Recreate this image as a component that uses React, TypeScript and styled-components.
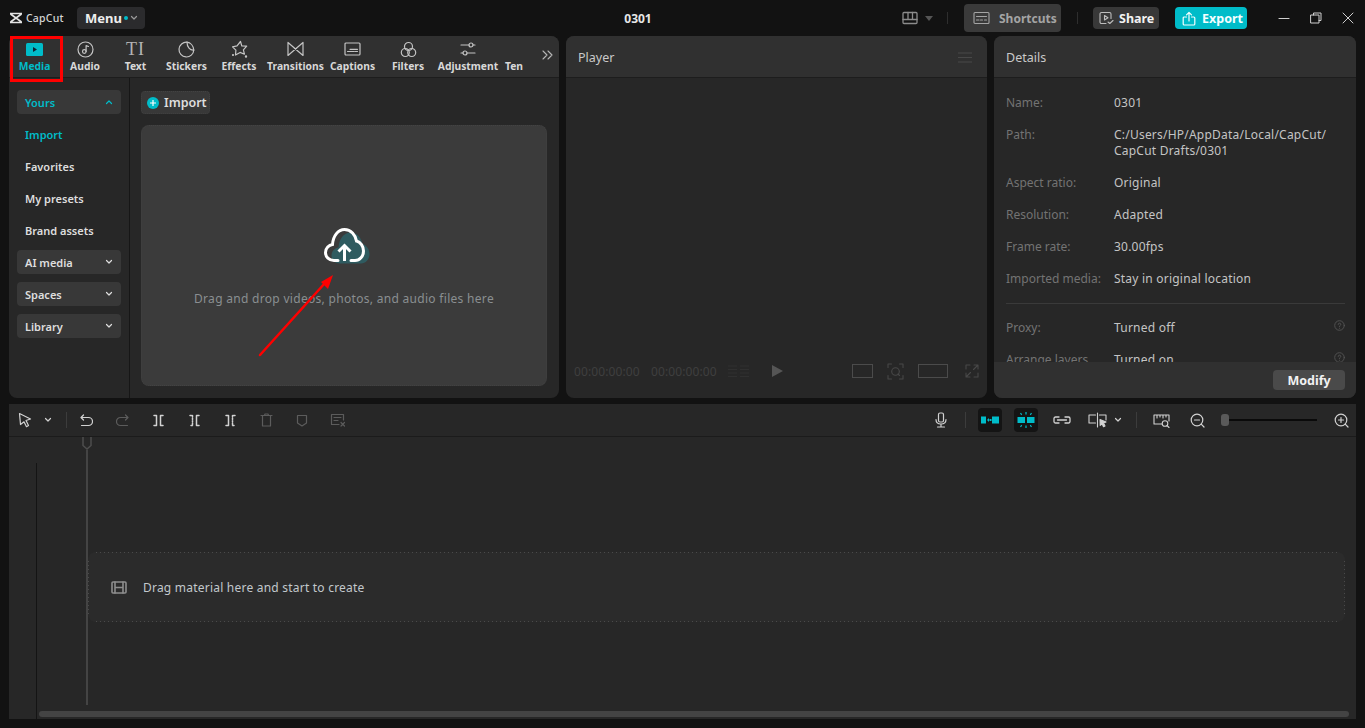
import React from 'react';
import styled, { createGlobalStyle } from 'styled-components';

const GlobalStyle = createGlobalStyle`
  html, body {
    margin: 0;
    padding: 0;
    background: #121212;
  }
  * {
    box-sizing: border-box;
  }
`;

const teal = '#00bcc9';
const uiFont = `"Noto Sans", "Open Sans", "Liberation Sans", sans-serif`;

const Page = styled.div`
  position: relative;
  width: 100%;
  height: 100vh;
  min-height: 728px;
  display: flex;
  flex-direction: column;
  overflow: hidden;
  background: #121212;
  color: #dcdcdc;
  font-family: ${uiFont};
`;

/* top bar */
const TopBar = styled.header`
  height: 36px;
  flex: none;
  display: grid;
  grid-template-columns: 615px 46px 1fr;
  align-items: center;
`;

const TopLeft = styled.div`
  display: flex;
  align-items: center;
  padding-left: 9px;
`;

const Logo = styled.div`
  display: flex;
  align-items: center;
  gap: 3px;
  width: 68px;
  font-size: 10.5px;
  font-weight: 500;
  letter-spacing: 0.2px;
  color: #d6d6d6;
`;

const MenuButton = styled.div`
  width: 68px;
  height: 22px;
  display: flex;
  align-items: center;
  padding-left: 8px;
  border-radius: 4px;
  background: #2b2b2d;
  font-size: 13px;
  font-weight: 700;
  color: #eee;
`;

const MenuCaret = styled.span`
  display: flex;
  color: #9a9a9a;
`;

const TealDot = styled.span`
  width: 4px;
  height: 4px;
  margin: 0 2px;
  border-radius: 50%;
  background: ${teal};
`;

const Title = styled.div`
  text-align: center;
  font-size: 12px;
  font-weight: 700;
  color: #e6e6e6;
`;

const TopRight = styled.div`
  display: flex;
  align-items: center;
  justify-content: flex-end;
`;

const LayoutPicker = styled.span`
  display: flex;
  align-items: center;
  gap: 7px;
  color: #8c8c8c;
`;

const TopDivider = styled.span<{ $left: number; $right: number }>`
  width: 1px;
  height: 12px;
  background: #2e2e2e;
  margin: 0 ${({ $right }) => $right}px 0 ${({ $left }) => $left}px;
`;

const ShortcutsButton = styled.div`
  width: 97px;
  height: 28px;
  display: flex;
  align-items: center;
  gap: 9px;
  padding-left: 9px;
  border-radius: 4px;
  background: #3a3a3a;
  font-size: 12px;
  font-weight: 700;
  color: #a4a4a4;
`;

const ShareButton = styled.div`
  width: 66px;
  height: 22px;
  display: flex;
  align-items: center;
  gap: 5px;
  padding-left: 6px;
  border-radius: 4px;
  background: #383838;
  font-size: 12.5px;
  font-weight: 700;
  color: #f2f2f2;
`;

const ShareIcon = styled.span`
  display: flex;
  color: #bdbdbd;
`;

const ExportButton = styled.div`
  width: 72px;
  height: 22px;
  margin-left: 16px;
  display: flex;
  align-items: center;
  gap: 6px;
  padding-left: 7px;
  border-radius: 4px;
  background: ${teal};
  font-size: 12.5px;
  font-weight: 700;
  color: #f4ffff;
`;

const WindowButtons = styled.div`
  display: flex;
  align-items: center;
  margin-left: 21px;
  padding-right: 1px;
`;

const WindowButton = styled.div`
  width: 32px;
  display: flex;
  justify-content: center;
  color: #cfcfcf;
`;

/* panels */
const PanelRow = styled.main`
  height: 362px;
  flex: none;
  display: flex;
  gap: 7px;
  padding: 0 9px;
`;

const Panel = styled.section<{ $width: number }>`
  width: ${({ $width }) => $width}px;
  flex: none;
  display: flex;
  flex-direction: column;
  border-radius: 8px;
  overflow: hidden;
  background: #272727;
`;

const PanelHeader = styled.div`
  height: 42px;
  flex: none;
  display: flex;
  align-items: center;
  justify-content: space-between;
  padding: 1px 15px 0 12px;
  background: #303030;
  border-bottom: 1px solid #1d1d1d;
  font-size: 12.5px;
  color: #c9c9c9;
`;

const TabBar = styled.nav`
  height: 42px;
  flex: none;
  display: flex;
  background: #303030;
  border-bottom: 1px solid #1d1d1d;
`;

const Tab = styled.div<{ $width: number; $active?: boolean }>`
  width: ${({ $width }) => $width}px;
  flex: none;
  display: flex;
  flex-direction: column;
  align-items: center;
  justify-content: flex-start;
  padding-top: 3px;
  font-size: 10.3px;
  font-weight: 700;
  white-space: nowrap;
  color: ${({ $active }) => ($active ? teal : '#d8d8d8')};
`;

const TabIcon = styled.div`
  height: 20px;
  display: flex;
  align-items: center;
  justify-content: center;
  color: #c4c4c4;
`;

const TabLabel = styled.span`
  line-height: 14px;
`;

const SerifIcon = styled.span`
  font-family: "Liberation Serif", serif;
  font-size: 18px;
  font-weight: 400;
  line-height: 20px;
  letter-spacing: 1px;
  color: #b4b4b4;
`;

const MoreTabs = styled.div`
  margin-left: 14px;
  height: 38px;
  display: flex;
  align-items: center;
  color: #b5b5b5;
`;

const MediaBody = styled.div`
  flex: 1;
  display: flex;
  min-height: 0;
`;

const Sidebar = styled.aside`
  width: 121px;
  flex: none;
  padding: 12px 8px 0;
  border-right: 1px solid #161616;
  display: flex;
  flex-direction: column;
  gap: 8px;
`;

const GroupHeader = styled.div<{ $active?: boolean }>`
  height: 24px;
  flex: none;
  display: flex;
  align-items: center;
  justify-content: space-between;
  padding: 0 8px;
  border-radius: 4px;
  background: #383838;
  font-size: 11px;
  font-weight: 600;
  color: ${({ $active }) => ($active ? teal : '#dedede')};
`;

const SideItem = styled.div<{ $active?: boolean }>`
  height: 24px;
  flex: none;
  display: flex;
  align-items: center;
  padding-left: 8px;
  font-size: 11px;
  font-weight: 600;
  color: ${({ $active }) => ($active ? teal : '#dedede')};
`;

const ImportArea = styled.div`
  flex: 1;
  padding: 13px 12px 12px 11px;
  display: flex;
  flex-direction: column;
  gap: 11px;
  min-width: 0;
`;

const ImportButton = styled.div`
  width: 69px;
  height: 23px;
  flex: none;
  display: flex;
  align-items: center;
  gap: 5px;
  padding-left: 5px;
  border-radius: 4px;
  border: 1px dotted #424242;
  background: #383838;
  font-size: 12.5px;
  font-weight: 600;
  color: #dedede;
`;

const PlusBadge = styled.span`
  width: 12px;
  height: 12px;
  flex: none;
  display: flex;
  align-items: center;
  justify-content: center;
  border-radius: 50%;
  background: ${teal};
`;

const DropZone = styled.div`
  flex: 1;
  display: flex;
  flex-direction: column;
  align-items: center;
  padding-top: 102px;
  border-radius: 8px;
  border: 1px dotted #434343;
  background: #3b3b3b;
`;

const CloudHolder = styled.div`
  height: 36px;
  margin-left: 8px;
`;

const DropText = styled.p`
  margin: 26px 0 0;
  font-size: 12px;
  letter-spacing: 0.3px;
  color: #8a8f91;
`;

/* player */
const PlayerMenu = styled.span`
  display: flex;
  color: #484848;
`;

const PlayerStage = styled.div`
  flex: 1;
`;

const PlayerControls = styled.div`
  height: 54px;
  flex: none;
  display: flex;
  align-items: center;
  padding: 0 8px;
  color: #484848;
`;

const TimeCode = styled.span`
  width: 77px;
  font-size: 12px;
  letter-spacing: 0.1px;
  color: #3f3f3f;
`;

const GridSlot = styled.div`
  width: 24px;
  margin-left: -1px;
  display: flex;
`;

const PlaySlot = styled.div`
  width: 52px;
  display: flex;
  justify-content: center;
`;

const RatioBox = styled.span<{ $width: number }>`
  width: ${({ $width }) => $width}px;
  height: 14px;
  flex: none;
  border: 1px solid #4b4b4b;
`;

const PlayerRight = styled.div`
  margin-left: auto;
  display: flex;
  align-items: center;
  gap: 14px;
`;

const FullscreenSlot = styled.span`
  margin-left: 3px;
  display: flex;
`;

/* details */
const DetailsBody = styled.div`
  flex: 1;
  min-height: 0;
  overflow: hidden;
  padding: 17px 11px 0 12px;
`;

const DetailRow = styled.div`
  display: grid;
  grid-template-columns: 108px 1fr;
  margin-bottom: 16px;
  font-size: 12px;
  line-height: 16px;
`;

const DetailLabel = styled.span`
  color: #737373;
`;

const DetailValue = styled.span`
  position: relative;
  color: #c4c4c4;
  letter-spacing: 0.22px;
`;

const HelpMark = styled.span`
  position: absolute;
  top: 0;
  right: 0;
  color: #555;
  display: flex;
`;

const DetailDivider = styled.hr`
  margin: 0 0 16px;
  border: 0;
  border-top: 1px solid #3a3a3a;
`;

const DetailsFooter = styled.div`
  height: 36px;
  flex: none;
  display: flex;
  align-items: center;
  justify-content: flex-end;
  padding: 0 11px 0 0;
  background: #303030;
`;

const ModifyButton = styled.div`
  width: 72px;
  height: 20px;
  display: flex;
  align-items: center;
  justify-content: center;
  border-radius: 4px;
  background: #4a4a4a;
  font-size: 12.5px;
  font-weight: 700;
  color: #f2f2f2;
`;

/* timeline */
const Timeline = styled.section`
  height: 315px;
  margin: 6px 9px 0;
  flex: none;
  display: flex;
  flex-direction: column;
  background: #272727;
`;

const Toolbar = styled.div`
  height: 33px;
  flex: none;
  display: flex;
  align-items: center;
  justify-content: space-between;
  padding: 0 3px 0 4px;
  border-bottom: 1px solid #1b1b1b;
`;

const ToolGroup = styled.div`
  display: flex;
  align-items: center;
  gap: 12px;
`;

const ToolButton = styled.div<{ $dim?: boolean; $active?: boolean }>`
  width: 24px;
  height: 24px;
  flex: none;
  display: flex;
  align-items: center;
  justify-content: center;
  border-radius: 4px;
  background: ${({ $active }) => ($active ? '#141414' : 'transparent')};
  color: ${({ $dim, $active }) => ($active ? teal : $dim ? '#5c5c5c' : '#d2d2d2')};
`;

const ToolChevron = styled.div<{ $pull: number }>`
  width: 12px;
  margin-left: ${({ $pull }) => $pull}px;
  display: flex;
  justify-content: center;
  color: #d2d2d2;
`;

const ToolDivider = styled.span<{ $pull?: number }>`
  width: 1px;
  height: 16px;
  margin-right: ${({ $pull }) => $pull ?? 0}px;
  background: #3c3c3c;
`;

const ZoomSlider = styled.div`
  position: relative;
  width: 96px;
  height: 2px;
  background: #0a0a0a;
`;

const ZoomThumb = styled.span`
  position: absolute;
  left: 0;
  top: -5px;
  width: 8px;
  height: 12px;
  border-radius: 3px;
  background: #5a5a5a;
`;

const TimelineBody = styled.div`
  position: relative;
  flex: 1;
  min-height: 0;
  display: flex;
`;

const Gutter = styled.div`
  width: 28px;
  flex: none;
  padding-top: 26px;
`;

const GutterLine = styled.div`
  height: 100%;
  margin-left: 27px;
  width: 1px;
  background: #141414;
`;

const TimelineMain = styled.div`
  flex: 1;
  min-width: 0;
  display: flex;
  flex-direction: column;
`;

const TrackArea = styled.div`
  flex: 1;
  padding: 115px 11px 0 51px;
`;

const dots = '#4a4a4a 0 1px, transparent 1px 4px';

const DropTrack = styled.div`
  height: 70px;
  display: flex;
  align-items: center;
  gap: 16px;
  padding-left: 23px;
  border-radius: 8px;
  background-color: #2b2b2b;
  background-image:
    repeating-linear-gradient(90deg, ${dots}),
    repeating-linear-gradient(90deg, ${dots}),
    repeating-linear-gradient(0deg, ${dots}),
    repeating-linear-gradient(0deg, ${dots});
  background-size:
    calc(100% - 16px) 1px,
    calc(100% - 16px) 1px,
    1px calc(100% - 16px),
    1px calc(100% - 16px);
  background-position:
    8px 0,
    8px 100%,
    0 8px,
    100% 8px;
  background-repeat: no-repeat;
  font-size: 12px;
  letter-spacing: 0.22px;
  color: #c2c8cc;
`;

const FilmIcon = styled.span`
  display: flex;
  color: #8e8e8e;
`;

const TimelineScroll = styled.div`
  height: 6px;
  margin: 0 7px 2px 2px;
  border-radius: 3px;
  background: #444;
`;

const Playhead = styled.div`
  position: absolute;
  top: 0;
  left: 72px;
  width: 12px;
  bottom: 14px;
  display: flex;
  flex-direction: column;
  align-items: center;
  color: #4d4d4d;
`;

const PlayheadLine = styled.span`
  flex: 1;
  width: 2px;
  background: #444;
`;

/* annotations on the screenshot */
const RedFrame = styled.div`
  position: absolute;
  left: 10px;
  top: 36px;
  width: 53px;
  height: 46px;
  border: 3px solid #f00;
  pointer-events: none;
`;

const RedArrow = styled.svg`
  position: absolute;
  left: 250px;
  top: 265px;
  pointer-events: none;
`;

type GlyphProps = { size?: number; w?: number; h?: number; sw?: number; children: React.ReactNode };

// stroke icon on a 24 grid unless width and height are given
const Glyph = ({ size = 16, w, h, sw = 1.5, children }: GlyphProps): JSX.Element => (
  <svg
    width={w ?? size}
    height={h ?? size}
    viewBox={`0 0 ${w ?? 24} ${h ?? 24}`}
    fill="none"
    stroke="currentColor"
    strokeWidth={sw}
    strokeLinecap="round"
    strokeLinejoin="round"
  >
    {children}
  </svg>
);

const Chevron = ({ up }: { up?: boolean }): JSX.Element => (
  <Glyph w={8} h={6} sw={1.2}>
    <path d={up ? 'M1.5 4.5 4 2l2.5 2.5' : 'M1.5 1.5 4 4l2.5-2.5'} />
  </Glyph>
);

const tabs: { label: string; width: number; icon: React.ReactNode }[] = [
  {
    label: 'Media',
    width: 51,
    icon: (
      <svg width="17" height="13" viewBox="0 0 17 13">
        <rect width="17" height="13" rx="1.5" fill={teal} />
        <path d="M7 4v5l4-2.5z" fill="#123" />
      </svg>
    ),
  },
  {
    label: 'Audio',
    width: 50,
    icon: (
      <Glyph w={17} h={17} sw={1.2}>
        <circle cx="8.5" cy="8.5" r="7.5" />
        <circle cx="7.3" cy="10.5" r="1.8" />
        <path d="M9.1 10.5V4.5l2.4 1" />
      </Glyph>
    ),
  },
  { label: 'Text', width: 51, icon: <SerifIcon>TI</SerifIcon> },
  {
    label: 'Stickers',
    width: 51,
    icon: (
      <Glyph w={17} h={17} sw={1.2}>
        <path d="M9 1.2a7.4 7.4 0 1 0 6.8 7.8C12 9.4 9 6 9 1.2Z" />
        <path d="M9 1.2c3.5.3 6.3 3.6 6.8 7.8" />
      </Glyph>
    ),
  },
  {
    label: 'Effects',
    width: 54,
    icon: (
      <Glyph w={19} h={19} sw={1.2}>
        <path d="M10.5 1.5 11.8 6l4.9.2-3.3 3.6 1 4.4-4.3-1.800L5.5 15l.4-4.8-3.4-3.400 4.500-1z" />
        <circle cx="16" cy="16.5" r=".6" />
        <circle cx="3" cy="15" r=".5" />
      </Glyph>
    ),
  },
  {
    label: 'Transitions',
    width: 59,
    icon: (
      <Glyph w={17} h={16} sw={1.2}>
        <path d="M1 1.5v13l15-13v13z" />
      </Glyph>
    ),
  },
  {
    label: 'Captions',
    width: 55,
    icon: (
      <Glyph w={17} h={14} sw={1.2}>
        <rect x="1" y="1" width="15" height="12" rx="1" />
        <path d="M3.5 9.5H10M11 9.5h2.5M6 7.3h7.5" />
      </Glyph>
    ),
  },
  {
    label: 'Filters',
    width: 56,
    icon: (
      <Glyph w={17} h={17} sw={1.2}>
        <circle cx="8.5" cy="5.5" r="4" />
        <circle cx="5.3" cy="11.5" r="4" />
        <circle cx="11.7" cy="11.5" r="4" />
      </Glyph>
    ),
  },
  {
    label: 'Adjustment',
    width: 64,
    icon: (
      <Glyph w={16} h={16} sw={1.2}>
        <path d="M1 4h8M13 4h2M1 12h2M7 12h8" />
        <circle cx="11" cy="4" r="2" />
        <circle cx="5" cy="12" r="2" />
      </Glyph>
    ),
  },
  { label: 'Ten', width: 28, icon: null },
];

const details: [string, React.ReactNode][] = [
  ['Name:', '0301'],
  ['Path:', <>C:/Users/HP/AppData/Local/CapCut/<br />CapCut Drafts/0301</>],
  ['Aspect ratio:', 'Original'],
  ['Resolution:', 'Adapted'],
  ['Frame rate:', '30.00fps'],
  ['Imported media:', 'Stay in original location'],
];

const Help = (): JSX.Element => (
  <HelpMark>
    <Glyph w={11} h={11} sw={0.9}>
      <circle cx="5.5" cy="5.5" r="4.8" />
      <path d="M4.2 4.4a1.3 1.3 0 1 1 1.9 1.2c-.4.2-.6.5-.6.9M5.5 8.2v.1" />
    </Glyph>
  </HelpMark>
);

const cloudPath =
  'M14 32.5H10C5 32.5 1.5 29 1.5 24.5 1.5 20 5 17 8.5 16.5 9 8 14 1.5 20.5 1.5 27 1.5 31.5 7 32.5 13 36.5 14 39.5 18.5 39.5 23 39.5 28.5 35.5 32.5 31 32.5H27';

const App = (): JSX.Element => {
  return (
    <Page>
      <GlobalStyle />
      <TopBar>
        <TopLeft>
          <Logo>
            <svg width="14" height="12" viewBox="0 0 14 12" fill="none" stroke="#e4e4e4" strokeWidth="1.6">
              <path d="M1 1.5h12M1 10.5h12M1.5 2 12.5 10M12.5 2 1.5 10" />
            </svg>
            CapCut
          </Logo>
          <MenuButton>
            Menu
            <TealDot />
            <MenuCaret>
              <Chevron />
            </MenuCaret>
          </MenuButton>
        </TopLeft>
        <Title>0301</Title>
        <TopRight>
          <LayoutPicker>
            <Glyph w={16} h={14} sw={1.3}>
              <rect x="1" y="1.5" width="14" height="11" rx="1" />
              <path d="M1 8.5h14M6 1.5v7M10.5 1.5v7" />
            </Glyph>
            <svg width="8" height="5" viewBox="0 0 8 5">
              <path d="M0 0h8L4 5z" fill="#555" />
            </svg>
          </LayoutPicker>
          <TopDivider $left={14} $right={16} />
          <ShortcutsButton>
            <Glyph w={17} h={14} sw={1.1}>
              <rect x="1" y="1.5" width="15" height="11" rx="1" />
              <path d="M3.5 5.5h10M3.5 9H6M7.5 9h2M11.5 9h2" />
            </Glyph>
            Shortcuts
          </ShortcutsButton>
          <TopDivider $left={16} $right={15} />
          <ShareButton>
            <ShareIcon>
              <Glyph w={15} h={14} sw={1.1}>
                <path d="M7 12.5H2.5A1.5 1.5 0 0 1 1 11V3a1.5 1.5 0 0 1 1.5-1.5h8A1.5 1.5 0 0 1 12 3v4.5" />
                <path d="M5.5 4.5V9L9 6.7zM9 11l1.8 1.5L14 9.5" />
              </Glyph>
            </ShareIcon>
            Share
          </ShareButton>
          <ExportButton>
            <Glyph w={14} h={15} sw={1.2}>
              <path d="M4.5 6H2.2a1 1 0 0 0-1 1v6a1 1 0 0 0 1 1h9.600a1 1 0 0 0 1-1V7a1 1 0 0 0-1-1H9.500" />
              <path d="M7 10V1.5M4.5 3.8 7 1.3l2.5 2.5" />
            </Glyph>
            Export
          </ExportButton>
          <WindowButtons>
            <WindowButton>
              <Glyph w={12} h={12} sw={1.1}>
                <path d="M1 6.5h10" />
              </Glyph>
            </WindowButton>
            <WindowButton>
              <Glyph w={12} h={12} sw={1}>
                <rect x="1" y="3" width="8" height="8" />
                <path d="M3.5 3V1H11v7.5H9" />
              </Glyph>
            </WindowButton>
            <WindowButton>
              <Glyph w={12} h={12} sw={1}>
                <path d="M1 1l10 10M11 1 1 11" />
              </Glyph>
            </WindowButton>
          </WindowButtons>
        </TopRight>
      </TopBar>

      <PanelRow>
        <Panel $width={550}>
          <TabBar>
            {tabs.map((tab) => (
              <Tab key={tab.label} $width={tab.width} $active={tab.label === 'Media'}>
                <TabIcon>{tab.icon}</TabIcon>
                <TabLabel>{tab.label}</TabLabel>
              </Tab>
            ))}
            <MoreTabs>
              <Glyph w={11} h={10} sw={1.1}>
                <path d="M1 1l4 4-4 4M6 1l4 4-4 4" />
              </Glyph>
            </MoreTabs>
          </TabBar>
          <MediaBody>
            <Sidebar>
              <GroupHeader $active>
                Yours
                <Chevron up />
              </GroupHeader>
              <SideItem $active>Import</SideItem>
              <SideItem>Favorites</SideItem>
              <SideItem>My presets</SideItem>
              <SideItem>Brand assets</SideItem>
              {['AI media', 'Spaces', 'Library'].map((name) => (
                <GroupHeader key={name}>
                  {name}
                  <Chevron />
                </GroupHeader>
              ))}
            </Sidebar>
            <ImportArea>
              <ImportButton>
                <PlusBadge>
                  <svg width="8" height="8" viewBox="0 0 8 8" stroke="#fff" strokeWidth="1.2">
                    <path d="M4 1v6M1 4h6" />
                  </svg>
                </PlusBadge>
                Import
              </ImportButton>
              <DropZone>
                <CloudHolder>
                  <svg width="48" height="36" viewBox="0 0 48 36" fill="none">
                    <path d={`${cloudPath}Z`} fill="#2f5b60" transform="translate(6 3)" />
                    <path d={cloudPath} stroke="#fff" strokeWidth="3" strokeLinecap="round" />
                    <path d="M20.5 33V18M14.5 23.5l6-6 6 6" stroke="#fff" strokeWidth="3" />
                  </svg>
                </CloudHolder>
                <DropText>Drag and drop videos, photos, and audio files here</DropText>
              </DropZone>
            </ImportArea>
          </MediaBody>
        </Panel>

        <Panel $width={421}>
          <PanelHeader>
            Player
            <PlayerMenu>
              <Glyph w={14} h={11} sw={1.2}>
                <path d="M.5 1h13M.5 5.5h13M.5 10h13" />
              </Glyph>
            </PlayerMenu>
          </PanelHeader>
          <PlayerStage />
          <PlayerControls>
            <TimeCode>00:00:00:00</TimeCode>
            <TimeCode>00:00:00:00</TimeCode>
            <GridSlot>
              <svg width="23" height="14" viewBox="0 0 23 14" stroke="#303030" strokeWidth="1">
                <path d="M1 2h9M1 5.5h9M1 9h9M1 12.5h9M13 2h9M13 5.5h9M13 9h9M13 12.5h9" />
              </svg>
            </GridSlot>
            <PlaySlot>
              <svg width="11" height="12" viewBox="0 0 11 12">
                <path d="M0 0l11 6-11 6z" fill="#555" />
              </svg>
            </PlaySlot>
            <PlayerRight>
              <RatioBox $width={21} />
              <Glyph w={17} h={17} sw={1.1}>
                <path d="M1 4.5V1h3.5M12.5 1H16v3.5M16 12.5V16h-3.5M4.5 16H1v-3.5" />
                <circle cx="8.5" cy="8.5" r="3.8" />
                <path d="M11 11l1.5 1.5" />
              </Glyph>
              <RatioBox $width={30} />
              <FullscreenSlot>
                <Glyph w={14} h={14} sw={1.1}>
                  <path d="M1 5V1h4M9 1h4v4M13 9v4H9M5 13H1V9M8.5 5.5l4-4M5.5 8.5l-4 4" />
                </Glyph>
              </FullscreenSlot>
            </PlayerRight>
          </PlayerControls>
        </Panel>

        <Panel $width={362}>
          <PanelHeader>Details</PanelHeader>
          <DetailsBody>
            {details.map(([label, value]) => (
              <DetailRow key={label}>
                <DetailLabel>{label}</DetailLabel>
                <DetailValue>{value}</DetailValue>
              </DetailRow>
            ))}
            <DetailDivider />
            <DetailRow>
              <DetailLabel>Proxy:</DetailLabel>
              <DetailValue>
                Turned off
                <Help />
              </DetailValue>
            </DetailRow>
            <DetailRow>
              <DetailLabel>Arrange layers</DetailLabel>
              <DetailValue>
                Turned on
                <Help />
              </DetailValue>
            </DetailRow>
          </DetailsBody>
          <DetailsFooter>
            <ModifyButton>Modify</ModifyButton>
          </DetailsFooter>
        </Panel>
      </PanelRow>

      <Timeline>
        <Toolbar>
          <ToolGroup>
            <ToolButton>
              <Glyph w={14} h={16} sw={1.2}>
                <path d="M1.5 1.5 12.5 7 8 8.5l2.5 5-2 1.2L6 9.8 2.5 12.5z" />
              </Glyph>
            </ToolButton>
            <ToolChevron $pull={-7}>
              <Chevron />
            </ToolChevron>
            <ToolDivider $pull={-5} />
            <ToolButton>
              <Glyph w={13} h={13} sw={1.2}>
                <path d="M3.5 1 1 3.5 3.5 6M1 3.5h7.5a3.6 3.6 0 0 1 0 8h-7" />
              </Glyph>
            </ToolButton>
            <ToolButton $dim>
              <Glyph w={13} h={13} sw={1.2}>
                <path d="M9.5 1 12 3.5 9.5 6M12 3.5H4.5a3.6 3.6 0 0 0 0 8h7" />
              </Glyph>
            </ToolButton>
            <ToolButton>
              <Glyph w={11} h={13} sw={1.5}>
                <path d="M1 1.5h2.5v10H1M10 1.5H7.5v10H10" />
              </Glyph>
            </ToolButton>
            <ToolButton>
              <Glyph w={11} h={13} sw={1.5}>
                <path d="M1 1.5h2.5v10H1" strokeDasharray="1.5 1" />
                <path d="M10 1.5H7.5v10H10" />
              </Glyph>
            </ToolButton>
            <ToolButton>
              <Glyph w={11} h={13} sw={1.5}>
                <path d="M1 1.5h2.5v10H1" />
                <path d="M10 1.5H7.5v10H10" strokeDasharray="1.5 1" />
              </Glyph>
            </ToolButton>
            <ToolButton $dim>
              <Glyph w={13} h={14} sw={1.2}>
                <path d="M1 2.5h11M4.5 2.5 5 1h3l.5 1.5M2.5 2.5V13h8V2.5" />
              </Glyph>
            </ToolButton>
            <ToolButton $dim>
              <Glyph w={12} h={13} sw={1.2}>
                <path d="M1.5 1.5h9V9L6 12 1.5 9z" />
              </Glyph>
            </ToolButton>
            <ToolButton $dim>
              <Glyph w={16} h={14} sw={1.2}>
                <path d="M9 11.5H1.5v-10h12V7M4 4.5h7M4 7.5h4M11 9.5l3.5 3.500M14.5 9.5 11 13" />
              </Glyph>
            </ToolButton>
          </ToolGroup>
          <ToolGroup>
            <ToolButton>
              <Glyph w={12} h={16} sw={1.2}>
                <rect x="3.5" y="1" width="5" height="9" rx="1.5" />
                <path d="M1 7.5c0 3 2 4.5 5 4.5s5-1.5 5-4.5M6 12v3M2.5 15h7" />
              </Glyph>
            </ToolButton>
            <ToolDivider />
            <ToolButton $active>
              <svg width="18" height="8" viewBox="0 0 18 8" fill={teal}>
                <rect y="0.5" width="5" height="7" />
                <rect x="11" y="0.5" width="7" height="7" />
                <path d="M6 4l2-2v4zM8.5 3h2v2h-2z" />
              </svg>
            </ToolButton>
            <ToolButton $active>
              <svg width="18" height="16" viewBox="0 0 18 16" fill={teal} stroke={teal}>
                <rect x="0.5" y="5" width="7.5" height="6" strokeWidth="0" />
                <rect x="10" y="5" width="7.5" height="6" strokeWidth="0" />
                <path d="M9 0v2.5M9 13.5V16M3.5 1l1.2 1.8M14.5 1l-1.2 1.8M3.5 15l1.2-1.8M14.5 15l-1.2-1.8" strokeWidth="1.2" />
              </svg>
            </ToolButton>
            <ToolButton>
              <Glyph w={18} h={8} sw={1.3}>
                <path d="M6 1H2.5A1.5 1.5 0 0 0 1 2.5v3A1.5 1.5 0 0 0 2.5 7H6M12 1h3.5A1.5 1.5 0 0 1 17 2.5v3A1.5 1.5 0 0 1 15.5 7H12M4.5 4h9" />
              </Glyph>
            </ToolButton>
            <ToolButton>
              <Glyph w={20} h={16} sw={1.1}>
                <path d="M7.5 3H1v8h6.5M9.5 1v14M11.5 3H18v5" />
                <path d="M12 7.5l6 2.5-2.5 1 1.5 3-1.500.7-1.300-2.800-2 1.500z" fill="currentColor" />
              </Glyph>
            </ToolButton>
            <ToolChevron $pull={-10}>
              <Chevron />
            </ToolChevron>
            <ToolDivider />
            <ToolButton>
              <Glyph w={17} h={15} sw={1.1}>
                <path d="M9 11H1V2h15v6M4 2v3M7 2v2M10 2v3M13 2v2" />
                <circle cx="12" cy="10.5" r="2.8" />
                <path d="M14 12.5l2 2" />
              </Glyph>
            </ToolButton>
            <ToolButton>
              <Glyph w={15} h={15} sw={1.2}>
                <circle cx="7" cy="7" r="5.8" />
                <path d="M4.5 7h5M11.2 11.2l2.8 2.8" />
              </Glyph>
            </ToolButton>
            <ZoomSlider>
              <ZoomThumb />
            </ZoomSlider>
            <ToolButton>
              <Glyph w={15} h={15} sw={1.2}>
                <circle cx="7" cy="7" r="5.8" />
                <path d="M4.5 7h5M7 4.5v5M11.2 11.2l2.8 2.8" />
              </Glyph>
            </ToolButton>
          </ToolGroup>
        </Toolbar>
        <TimelineBody>
          <Gutter>
            <GutterLine />
          </Gutter>
          <TimelineMain>
            <TrackArea>
              <DropTrack>
                <FilmIcon>
                  <Glyph w={16} h={13} sw={1.6}>
                    <rect x="1" y="1" width="14" height="11" rx="1" />
                    <path d="M4 1v11M12 1v11M4 6.5h8" />
                  </Glyph>
                </FilmIcon>
                Drag material here and start to create
              </DropTrack>
            </TrackArea>
            <TimelineScroll />
          </TimelineMain>
          <Playhead>
            <svg width="10" height="13" viewBox="0 0 10 13" fill="none" stroke="currentColor" strokeWidth="1.5">
              <path d="M1 0v8.5L5 12l4-3.500V0" />
            </svg>
            <PlayheadLine />
          </Playhead>
        </TimelineBody>
      </Timeline>

      <RedFrame />
      <RedArrow width="90" height="100" viewBox="0 0 90 100" fill="none">
        <path d="M10 90 75 18" stroke="#f00" strokeWidth="2.5" strokeLinecap="round" />
        <path d="M83 10 71 17l7 7z" fill="#f00" />
      </RedArrow>
    </Page>
  );
};

export default App;
